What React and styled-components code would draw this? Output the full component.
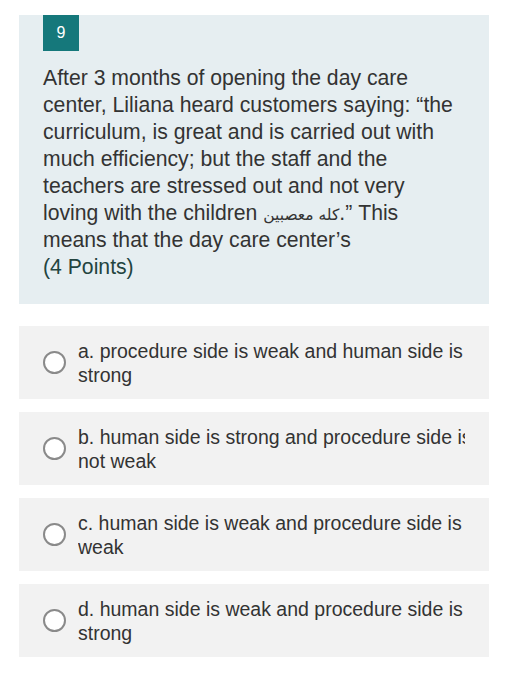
import React from 'react'
import styled, { createGlobalStyle } from 'styled-components'

const GlobalStyle = createGlobalStyle`
  body {
    margin: 0;
    background: #ffffff;
    font-family: "Liberation Sans", "DejaVu Sans", Arial, sans-serif;
    color: #333333;
  }
`

const options = [
  ['a. procedure side is weak and human side is', 'strong'],
  ['b. human side is strong and procedure side is', 'not weak'],
  ['c. human side is weak and procedure side is', 'weak'],
  ['d. human side is weak and procedure side is', 'strong'],
]

function App() {
  return (
    <Page>
      <GlobalStyle />
      <QuestionCard>
        <Badge>9</Badge>
        <QuestionText>
          After 3 months of opening the day care center, Liliana heard customers saying: “the
          curriculum, is great and is carried out with much efficiency; but the staff and the
          teachers are stressed out and not very loving with the children <Arabic dir="rtl">كله معصبين</Arabic>.” This
          means that the day care center’s
        </QuestionText>
        <Points>(4 Points)</Points>
      </QuestionCard>
      <OptionList>
        {options.map(lines => (
          <Option key={lines[0]}>
            <Radio />
            <OptionText>
              {lines.map(l => (
                <Line key={l}>{l}</Line>
              ))}
            </OptionText>
          </Option>
        ))}
      </OptionList>
    </Page>
  )
}

const Page = styled.div`
  width: 508px;
  height: 700px;
  padding: 15px 19px 0;
  box-sizing: border-box;
  display: flex;
  flex-direction: column;
  gap: 22px;
`

const QuestionCard = styled.div`
  background: #e6eef1;
  padding: 0 24px 24px;
  display: flex;
  flex-direction: column;
  align-items: flex-start;
`

const Badge = styled.div`
  width: 36px;
  height: 36px;
  background: #15787b;
  color: #ffffff;
  font-size: 16px;
  display: flex;
  align-items: center;
  justify-content: center;
  margin-bottom: 13px;
`

const QuestionText = styled.div`
  width: 410px;
  font-size: 21.2px;
  line-height: 27px;
  color: #333333;
`

const Arabic = styled.span`
  font-family: "DejaVu Sans", sans-serif;
  font-size: 15.5px;
  line-height: 0;
`

const Points = styled.div`
  font-size: 21.2px;
  line-height: 27px;
  color: #23443f;
`

const OptionList = styled.div`
  display: flex;
  flex-direction: column;
  gap: 13px;
`

const Option = styled.div`
  background: #f2f2f2;
  height: 73px;
  display: flex;
  align-items: center;
  padding-left: 24px;
  box-sizing: border-box;
`

const Radio = styled.span`
  width: 19px;
  height: 19px;
  border: 2px solid #8a8a8a;
  border-radius: 50%;
  background: #ffffff;
  flex-shrink: 0;
  margin-right: 12px;
`

const OptionText = styled.div`
  width: 387px;
  overflow: hidden;
  font-size: 19.5px;
  line-height: 24px;
  color: #333333;
`

const Line = styled.div`
  white-space: nowrap;
`

export default App
